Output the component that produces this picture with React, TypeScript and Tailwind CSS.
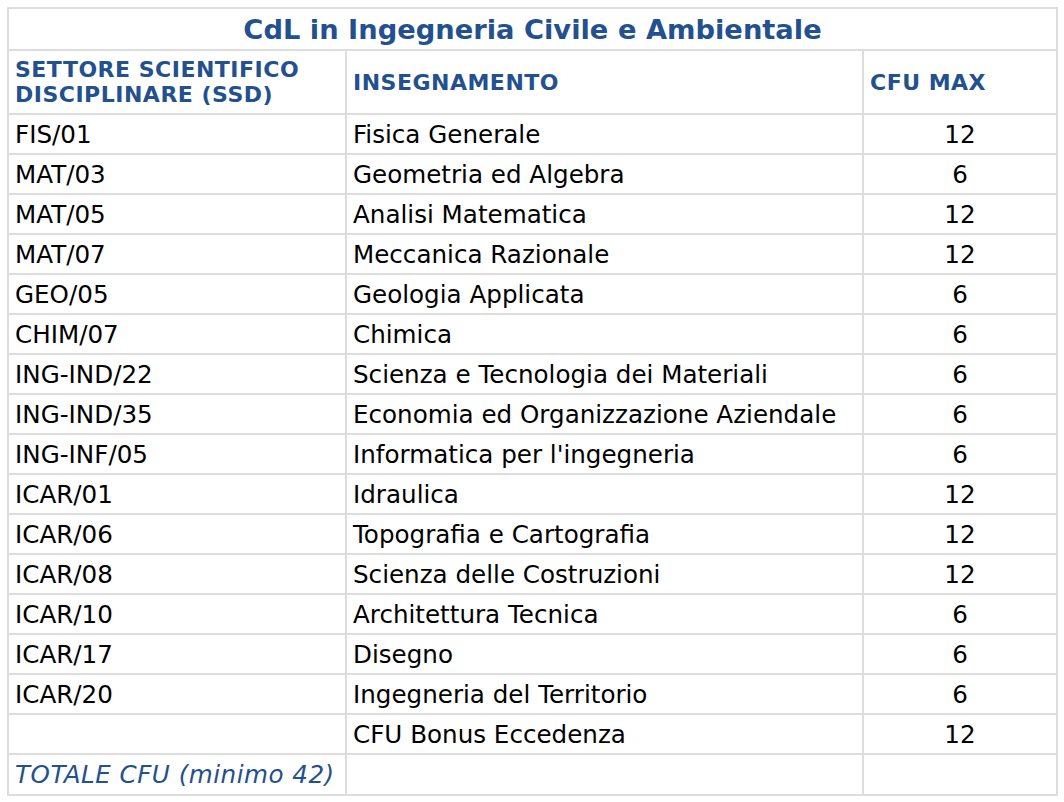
const rows: [string, string, string][] = [
  ['FIS/01', 'Fisica Generale', '12'],
  ['MAT/03', 'Geometria ed Algebra', '6'],
  ['MAT/05', 'Analisi Matematica', '12'],
  ['MAT/07', 'Meccanica Razionale', '12'],
  ['GEO/05', 'Geologia Applicata', '6'],
  ['CHIM/07', 'Chimica', '6'],
  ['ING-IND/22', 'Scienza e Tecnologia dei Materiali', '6'],
  ['ING-IND/35', 'Economia ed Organizzazione Aziendale', '6'],
  ['ING-INF/05', "Informatica per l'ingegneria", '6'],
  ['ICAR/01', 'Idraulica', '12'],
  ['ICAR/06', 'Topografia e Cartografia', '12'],
  ['ICAR/08', 'Scienza delle Costruzioni', '12'],
  ['ICAR/10', 'Architettura Tecnica', '6'],
  ['ICAR/17', 'Disegno', '6'],
  ['ICAR/20', 'Ingegneria del Territorio', '6'],
  ['', 'CFU Bonus Eccedenza', '12'],
]

const cell = 'border-2 border-[#dddddd] px-[6px] align-middle'

export default function App() {
  return (
    <div className="min-h-screen bg-white pt-[7px] pl-[7px] font-['DejaVu_Sans',Verdana,sans-serif]">
      <table className="w-[1049px] table-fixed border-collapse border-2 border-[#dddddd]">
        <colgroup>
          <col className="w-[338px]" />
          <col className="w-[517px]" />
          <col className="w-[194px]" />
        </colgroup>
        <tbody>
          <tr className="h-[42px]">
            <td colSpan={3} className={`${cell} pt-[2px] text-center text-[27.3px] font-bold leading-[32px] text-[#23508e]`}>
              CdL in Ingegneria Civile e Ambientale
            </td>
          </tr>
          <tr className="h-[64px] text-[22px] font-bold leading-[25px] tracking-[0.5px] text-[#23508e]">
            <td className={cell}>
              SETTORE SCIENTIFICO
              <br />
              DISCIPLINARE (SSD)
            </td>
            <td className={cell}>INSEGNAMENTO</td>
            <td className={cell}>CFU MAX</td>
          </tr>
          {rows.map(([ssd, name, cfu], i) => (
            <tr key={i} className="h-[40px] text-[24.6px] leading-[28px] text-black">
              <td className={`${cell} pt-[1px]`}>{ssd}</td>
              <td className={`${cell} pt-[1px]`}>{name}</td>
              <td className={`${cell} pt-[1px] text-center`}>{cfu}</td>
            </tr>
          ))}
          <tr className="h-[41px] text-[24.6px] leading-[28px]">
            <td className={`${cell} pt-[1px] italic tracking-[0.5px] text-[#23508e]`}>TOTALE CFU (minimo 42)</td>
            <td className={cell}></td>
            <td className={cell}></td>
          </tr>
        </tbody>
      </table>
    </div>
  )
}
